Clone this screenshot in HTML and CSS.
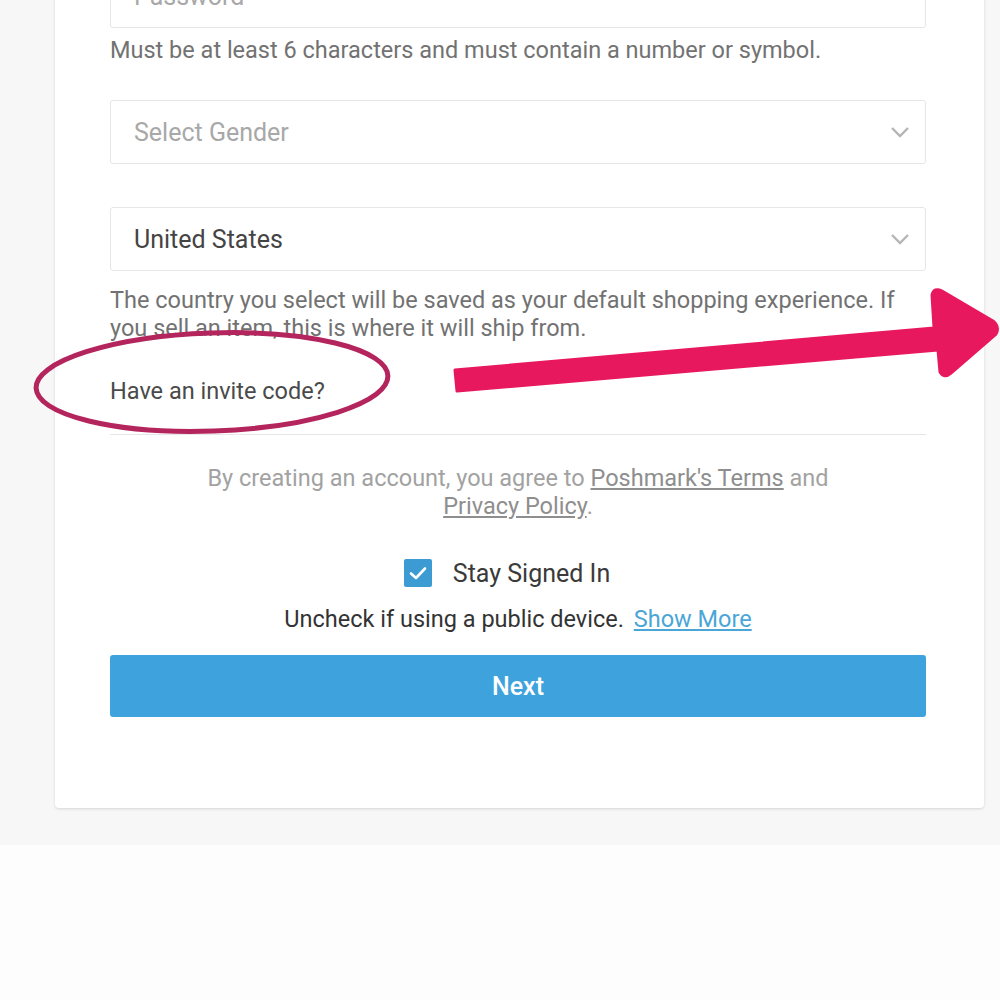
FILE: index.html
```html
<!DOCTYPE html>
<html>
<head>
<meta charset="utf-8">
<link rel="stylesheet" href="styles.css">
</head>
<body>
<div class="page">
  <div class="card">
    <div class="field"><span class="placeholder">Password</span></div>
    <p class="helper">Must be at least 6 characters and must contain a number or symbol.</p>

    <div class="field select gender"><span class="placeholder">Select Gender</span>
      <svg class="chev" width="20" height="12" viewBox="0 0 20 12"><path d="M2 2 L10 10 L18 2" fill="none" stroke="#b5b5b5" stroke-width="2.4"/></svg>
    </div>

    <div class="field select country"><span class="value">United States</span>
      <svg class="chev" width="20" height="12" viewBox="0 0 20 12"><path d="M2 2 L10 10 L18 2" fill="none" stroke="#b5b5b5" stroke-width="2.4"/></svg>
    </div>
    <p class="helper country-note">The country you select will be saved as your default shopping experience. If you sell an item, this is where it will ship from.</p>

    <p class="invite">Have an invite code?</p>
    <hr class="divider">

    <p class="terms">By creating an account, you agree to <a href="#">Poshmark's Terms</a> and<br><a href="#">Privacy Policy</a>.</p>

    <div class="stay">
      <span class="checkbox"><svg width="28" height="28" viewBox="0 0 28 28"><path d="M7 14.5 L12 19 L21 9.5" fill="none" stroke="#fff" stroke-width="2.6" stroke-linecap="round" stroke-linejoin="round"/></svg></span>
      <span class="stay-label">Stay Signed In</span>
    </div>
    <p class="uncheck">Uncheck if using a public device. <a href="#">Show More</a></p>

    <button class="next">Next</button>
  </div>
</div>
<div class="bottom"></div>

<svg class="markup" width="1000" height="460" viewBox="0 0 1000 460">
  <ellipse cx="212" cy="382" rx="176" ry="49" fill="none" stroke="#b3255c" stroke-width="5" transform="rotate(-2 212 382)"/>
  <path d="M455 370 L457 391 L938 350 L940 372 Q944 379 951 373 L996 334 Q1000 327 993 321 L942 291 Q934 287 932 295 L934 328 Z" fill="#e8185e" stroke="#e8185e" stroke-width="3" stroke-linejoin="round"/>
</svg>
</body>
</html>
```

FILE: styles.css
```css
html, body {
  margin: 0;
  padding: 0;
}
body {
  background: #fdfdfd;
  font-family: Roboto, "Liberation Sans", sans-serif;
  position: relative;
  width: 1000px;
  height: 1000px;
  overflow: hidden;
}
.page {
  display: flow-root;
  background: #f7f7f7;
  height: 845px;
  padding: 0 16px 0 55px;
  box-sizing: border-box;
}
.card {
  background: #fff;
  margin-top: -62px;
  padding: 26px 58px 91px 55px;
  border-radius: 0 0 4px 4px;
  box-shadow: 0 1px 3px rgba(0,0,0,0.14);
  display: flex;
  flex-direction: column;
}
.field {
  height: 62px;
  border: 1px solid #e6e6e6;
  border-radius: 3px;
  display: flex;
  align-items: center;
  justify-content: space-between;
  padding: 0 15px 0 23px;
  font-size: 25px;
}
.placeholder { color: #a8a8a8; }
.value { color: #444; }
.helper {
  margin: 8px 0 0;
  font-size: 23.5px;
  line-height: 28px;
  color: #727272;
}
.gender { margin-top: 36px; }
.country { margin-top: 43px; }
.country-note { margin-top: 15px; }
.invite {
  margin: 35px 0 0;
  font-size: 23.5px;
  line-height: 28px;
  color: #4a4a4a;
}
.divider {
  margin: 29px 0 0;
  border: 0;
  border-top: 1px solid #e6e6e6;
  height: 0;
}
.terms {
  margin: 29px 0 0;
  text-align: center;
  font-size: 23.5px;
  line-height: 28px;
  color: #a2a2a2;
}
.terms a { color: #8e8e8e; text-decoration: underline; }
.stay {
  margin-top: 39px;
  padding-right: 22px;
  display: flex;
  align-items: center;
  justify-content: center;
  gap: 21px;
  height: 28px;
}
.checkbox {
  width: 28px;
  height: 28px;
  background: #3d9bd4;
  border-radius: 2px;
  display: block;
}
.checkbox svg { display: block; }
.stay-label { font-size: 25px; color: #3a3a3a; }
.uncheck {
  margin: 18px 0 0;
  text-align: center;
  font-size: 23.5px;
  line-height: 28px;
  color: #333;
}
.uncheck a { color: #4aa6d6; text-decoration: underline; margin-left: 4px; }
.next {
  margin-top: 22px;
  height: 62px;
  border: 0;
  border-radius: 3px;
  background: #3ea2dd;
  color: #fff;
  font-family: Roboto, "Liberation Sans", sans-serif;
  font-weight: 500;
  font-size: 25px;
}
.markup {
  position: absolute;
  left: 0;
  top: 0;
  pointer-events: none;
}
```
